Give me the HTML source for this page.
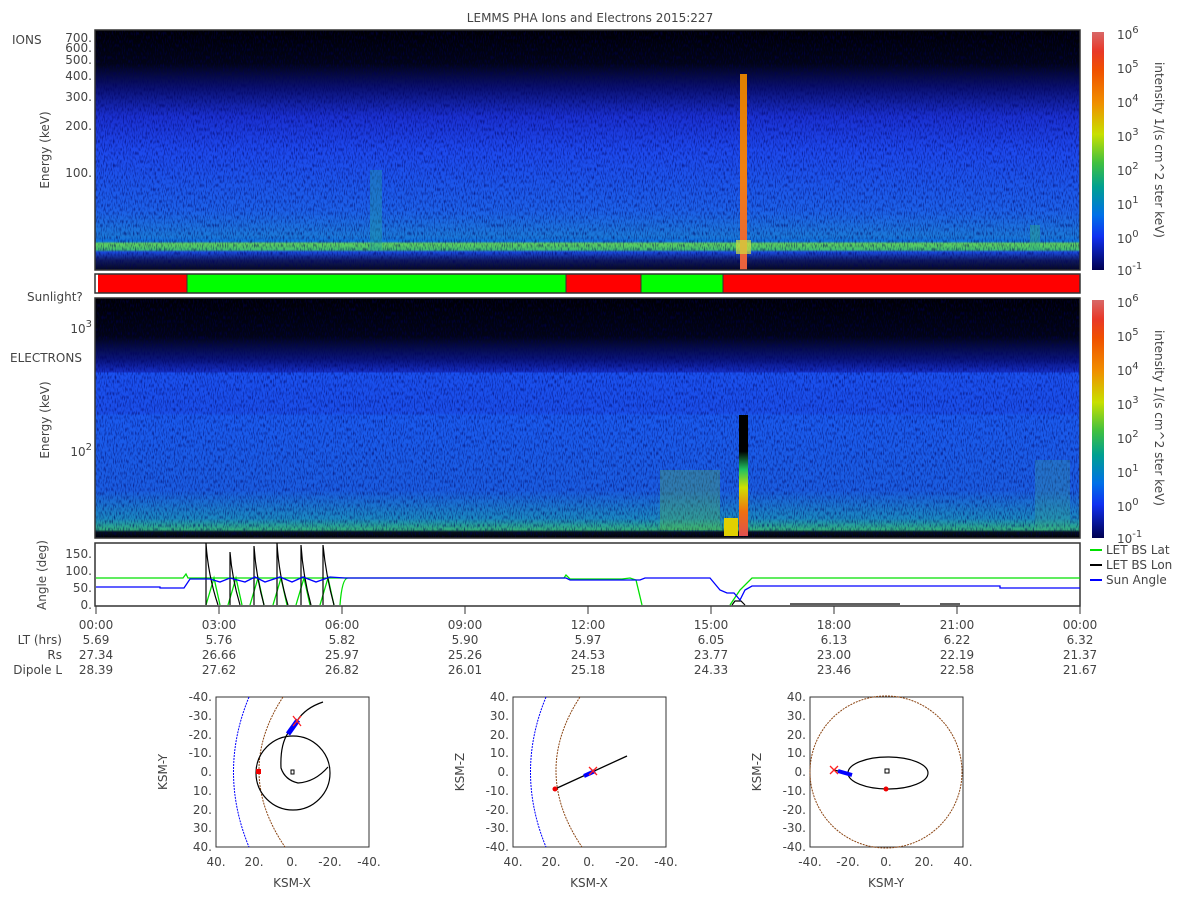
<!DOCTYPE html>
<html><head><meta charset="utf-8"><style>
html,body{margin:0;padding:0;background:#fff;}
svg{display:block;font-family:"DejaVu Sans","Liberation Sans",sans-serif;}
text{fill:#444;font-size:12px;}
</style></head><body>
<svg width="1200" height="900" viewBox="0 0 1200 900" xmlns="http://www.w3.org/2000/svg">
<defs>
<linearGradient id="ionbg" x1="0" y1="0" x2="0" y2="1">
<stop offset="0" stop-color="#000004"/>
<stop offset="0.14" stop-color="#020416"/>
<stop offset="0.24" stop-color="#0a1070"/>
<stop offset="0.36" stop-color="#1a30d0"/>
<stop offset="0.5" stop-color="#1d48ec"/>
<stop offset="0.75" stop-color="#1c60e8"/>
<stop offset="0.86" stop-color="#1b78d8"/>
<stop offset="0.88" stop-color="#0c70e0"/>
<stop offset="0.89" stop-color="#60d060"/>
<stop offset="0.915" stop-color="#40c070"/>
<stop offset="0.925" stop-color="#1a4ae0"/>
<stop offset="0.96" stop-color="#101a60"/>
<stop offset="1" stop-color="#050820"/>
</linearGradient>
<linearGradient id="elbg" x1="0" y1="0" x2="0" y2="1">
<stop offset="0" stop-color="#000004"/>
<stop offset="0.16" stop-color="#020416"/>
<stop offset="0.26" stop-color="#0a1580"/>
<stop offset="0.31" stop-color="#1530c8"/>
<stop offset="0.31" stop-color="#1a50ee"/>
<stop offset="0.48" stop-color="#1a4ee8"/>
<stop offset="0.49" stop-color="#1a5aee"/>
<stop offset="0.8" stop-color="#1a5ce0"/>
<stop offset="0.92" stop-color="#1a88c0"/>
<stop offset="0.965" stop-color="#30b080"/>
<stop offset="0.975" stop-color="#081020"/>
<stop offset="1" stop-color="#000000"/>
</linearGradient>
<linearGradient id="cbar" x1="0" y1="0" x2="0" y2="1">
<stop offset="0" stop-color="#d86868"/>
<stop offset="0.08" stop-color="#e83828"/>
<stop offset="0.16" stop-color="#f05000"/>
<stop offset="0.3" stop-color="#f09000"/>
<stop offset="0.43" stop-color="#c8e000"/>
<stop offset="0.55" stop-color="#40c040"/>
<stop offset="0.65" stop-color="#00a090"/>
<stop offset="0.77" stop-color="#0070e8"/>
<stop offset="0.86" stop-color="#1030f0"/>
<stop offset="1" stop-color="#000050"/>
</linearGradient>
<linearGradient id="spike" x1="0" y1="0" x2="0" y2="1">
<stop offset="0" stop-color="#e08000"/>
<stop offset="0.5" stop-color="#f08010"/>
<stop offset="1" stop-color="#e86040"/>
</linearGradient>
<linearGradient id="espike" x1="0" y1="0" x2="0" y2="1">
<stop offset="0" stop-color="#000"/>
<stop offset="0.3" stop-color="#000"/>
<stop offset="0.45" stop-color="#20c060"/>
<stop offset="0.6" stop-color="#d0e000"/>
<stop offset="0.8" stop-color="#f07010"/>
<stop offset="1" stop-color="#e05050"/>
</linearGradient>
<filter id="noise" x="0" y="0" width="100%" height="100%">
<feTurbulence type="fractalNoise" baseFrequency="0.9 0.25" numOctaves="1" seed="3"/>
<feColorMatrix type="matrix" values="0 0 0 0 0  0 0 0 0 0  0 0 0 0 0.1  0 0 0 -3 1.6"/>
</filter>
</defs>

<text x="590" y="22" text-anchor="middle">LEMMS PHA Ions and Electrons  2015:227</text>

<!-- ION spectrogram -->
<rect x="95" y="30" width="985" height="240" fill="url(#ionbg)"/>
<rect x="95" y="30" width="985" height="240" filter="url(#noise)" opacity="0.6"/>
<rect x="370" y="170" width="12" height="80" fill="#20a0a0" opacity="0.4"/>
<rect x="740" y="74" width="7" height="196" fill="url(#spike)"/>
<rect x="736" y="240" width="15" height="14" fill="#d0e040" opacity="0.7"/>
<rect x="1030" y="225" width="10" height="25" fill="#30b080" opacity="0.4"/>
<rect x="95" y="30" width="985" height="240" fill="none" stroke="#333" stroke-width="1.5"/>
<text x="12" y="44">IONS</text>
<g text-anchor="end">
<text x="92" y="42">700.</text><text x="92" y="52">600.</text><text x="92" y="64">500.</text>
<text x="92" y="80">400.</text><text x="92" y="101">300.</text><text x="92" y="130">200.</text>
<text x="92" y="177">100.</text>
</g>
<text transform="translate(49,150) rotate(-90)" text-anchor="middle">Energy (keV)</text>

<!-- colorbar ions -->
<rect x="1092" y="32" width="12" height="238" fill="url(#cbar)"/>
<g font-size="13">
<text x="1117" y="39">10<tspan dy="-6" font-size="10">6</tspan></text>
<text x="1117" y="73">10<tspan dy="-6" font-size="10">5</tspan></text>
<text x="1117" y="107">10<tspan dy="-6" font-size="10">4</tspan></text>
<text x="1117" y="141">10<tspan dy="-6" font-size="10">3</tspan></text>
<text x="1117" y="175">10<tspan dy="-6" font-size="10">2</tspan></text>
<text x="1117" y="209">10<tspan dy="-6" font-size="10">1</tspan></text>
<text x="1117" y="243">10<tspan dy="-6" font-size="10">0</tspan></text>
<text x="1117" y="275">10<tspan dy="-6" font-size="10">-1</tspan></text>
</g>
<text transform="translate(1155,150) rotate(90)" text-anchor="middle">intensity 1/(s cm^2 ster keV)</text>

<!-- Sunlight bar -->
<rect x="95" y="274" width="985" height="19" fill="#ff0000" stroke="#333" stroke-width="1"/>
<rect x="95" y="274" width="3" height="19" fill="#fff"/>
<rect x="187" y="274" width="379" height="19" fill="#00ff00"/>
<rect x="641" y="274" width="82" height="19" fill="#00ff00"/>
<line x1="187" y1="274" x2="187" y2="293" stroke="#333"/><line x1="566" y1="274" x2="566" y2="293" stroke="#333"/>
<line x1="641" y1="274" x2="641" y2="293" stroke="#333"/><line x1="723" y1="274" x2="723" y2="293" stroke="#333"/>
<rect x="95" y="274" width="985" height="19" fill="none" stroke="#333" stroke-width="1.5"/>
<text x="27" y="301">Sunlight?</text>

<!-- ELECTRON spectrogram -->
<rect x="95" y="298" width="985" height="240" fill="url(#elbg)"/>
<rect x="95" y="298" width="985" height="240" filter="url(#noise)" opacity="0.6"/>
<rect x="660" y="470" width="60" height="60" fill="#60c040" opacity="0.3"/>
<rect x="724" y="518" width="14" height="18" fill="#e0d000"/>
<rect x="739" y="415" width="9" height="121" fill="url(#espike)"/>
<rect x="1035" y="460" width="35" height="70" fill="#40b080" opacity="0.25"/>
<rect x="95" y="298" width="985" height="240" fill="none" stroke="#333" stroke-width="1.5"/>
<text x="10" y="362">ELECTRONS</text>
<text x="92" y="333" text-anchor="end">10<tspan dy="-6" font-size="10">3</tspan></text>
<text x="92" y="456" text-anchor="end">10<tspan dy="-6" font-size="10">2</tspan></text>
<text transform="translate(49,420) rotate(-90)" text-anchor="middle">Energy (keV)</text>

<rect x="1092" y="300" width="12" height="238" fill="url(#cbar)"/>
<g font-size="13">
<text x="1117" y="307">10<tspan dy="-6" font-size="10">6</tspan></text>
<text x="1117" y="341">10<tspan dy="-6" font-size="10">5</tspan></text>
<text x="1117" y="375">10<tspan dy="-6" font-size="10">4</tspan></text>
<text x="1117" y="409">10<tspan dy="-6" font-size="10">3</tspan></text>
<text x="1117" y="443">10<tspan dy="-6" font-size="10">2</tspan></text>
<text x="1117" y="477">10<tspan dy="-6" font-size="10">1</tspan></text>
<text x="1117" y="511">10<tspan dy="-6" font-size="10">0</tspan></text>
<text x="1117" y="543">10<tspan dy="-6" font-size="10">-1</tspan></text>
</g>
<text transform="translate(1155,418) rotate(90)" text-anchor="middle">intensity 1/(s cm^2 ster keV)</text>

<!-- Angle plot -->
<rect x="95" y="543" width="985" height="63" fill="#fff" stroke="#333" stroke-width="1.5"/>
<g text-anchor="end">
<text x="92" y="558">150.</text><text x="92" y="575">100.</text><text x="92" y="592">50.</text><text x="92" y="609">0.</text>
</g>
<text transform="translate(46,575) rotate(-90)" text-anchor="middle">Angle (deg)</text>
<path fill="none" stroke="#00e000" stroke-width="1.3" d="M96,578 H183 L186,574 L188,578 H360 M206,605 L214,578 L220,605 M228,605 L236,578 L242,605 M250,605 L258,578 L264,605 M273,605 L281,578 L287,605 M296,605 L304,578 L310,605 M320,605 L328,578 L334,605 M340,605 Q342,578 348,578 H564 L566,575 L570,579 H622 L630,578 L636,580 L642,605 M730,605 L740,590 L752,578 H1080"/>
<path fill="none" stroke="#000" stroke-width="1.2" d="M206,605 V543 Q208,575 218,605 M230,605 V552 Q232,578 240,605 M254,605 V546 Q256,576 264,605 M277,605 V543 Q279,576 288,605 M301,605 V545 Q303,576 311,605 M323,605 V545 Q326,576 334,605 M732,605 L735,601 H741 L745,605 M790,604 H900 M940,604 H960"/>
<path fill="none" stroke="#0000ff" stroke-width="1.3" d="M96,587 H160 V588 H184 L190,579 H210 L220,582 L230,578 L245,582 L255,577 L265,582 L280,577 L292,582 L303,577 L316,582 L330,577 L345,578 H566 L570,580 H640 L645,578 H710 L720,590 L727,593 L734,593 L740,600 L745,590 L752,586 H1000 V588 H1080"/>
<line x1="1090" y1="550" x2="1102" y2="550" stroke="#00e000" stroke-width="2"/><text x="1106" y="554" font-size="11">LET BS Lat</text>
<line x1="1090" y1="565" x2="1102" y2="565" stroke="#000" stroke-width="2"/><text x="1106" y="569" font-size="11">LET BS Lon</text>
<line x1="1090" y1="580" x2="1102" y2="580" stroke="#0000ff" stroke-width="2"/><text x="1106" y="584" font-size="11">Sun Angle</text>
<g stroke="#333">
<line x1="96" y1="606" x2="96" y2="614"/><line x1="219" y1="606" x2="219" y2="614"/><line x1="342" y1="606" x2="342" y2="614"/>
<line x1="465" y1="606" x2="465" y2="614"/><line x1="588" y1="606" x2="588" y2="614"/><line x1="711" y1="606" x2="711" y2="614"/>
<line x1="834" y1="606" x2="834" y2="614"/><line x1="957" y1="606" x2="957" y2="614"/><line x1="1080" y1="606" x2="1080" y2="614"/>
</g>

<g text-anchor="end">
<text x="62" y="644">LT (hrs)</text><text x="62" y="659">Rs</text><text x="62" y="674">Dipole L</text>
</g>
<g text-anchor="middle">
<text x="96" y="629">00:00</text><text x="219" y="629">03:00</text><text x="342" y="629">06:00</text><text x="465" y="629">09:00</text><text x="588" y="629">12:00</text><text x="711" y="629">15:00</text><text x="834" y="629">18:00</text><text x="957" y="629">21:00</text><text x="1080" y="629">00:00</text>
<text x="96" y="644">5.69</text><text x="219" y="644">5.76</text><text x="342" y="644">5.82</text><text x="465" y="644">5.90</text><text x="588" y="644">5.97</text><text x="711" y="644">6.05</text><text x="834" y="644">6.13</text><text x="957" y="644">6.22</text><text x="1080" y="644">6.32</text>
<text x="96" y="659">27.34</text><text x="219" y="659">26.66</text><text x="342" y="659">25.97</text><text x="465" y="659">25.26</text><text x="588" y="659">24.53</text><text x="711" y="659">23.77</text><text x="834" y="659">23.00</text><text x="957" y="659">22.19</text><text x="1080" y="659">21.37</text>
<text x="96" y="674">28.39</text><text x="219" y="674">27.62</text><text x="342" y="674">26.82</text><text x="465" y="674">26.01</text><text x="588" y="674">25.18</text><text x="711" y="674">24.33</text><text x="834" y="674">23.46</text><text x="957" y="674">22.58</text><text x="1080" y="674">21.67</text>
</g>

<!-- Orbit plot 1 -->
<g>
<rect x="216" y="697" width="153" height="150" fill="#fff" stroke="#333"/>
<g text-anchor="end" font-size="11">
<text x="212" y="701">-40.</text><text x="212" y="720">-30.</text><text x="212" y="739">-20.</text><text x="212" y="757">-10.</text><text x="212" y="776">0.</text><text x="212" y="795">10.</text><text x="212" y="814">20.</text><text x="212" y="832">30.</text><text x="212" y="851">40.</text>
</g>
<g text-anchor="middle" font-size="11">
<text x="216" y="866">40.</text><text x="254" y="866">20.</text><text x="292" y="866">0.</text><text x="330" y="866">-20.</text><text x="369" y="866">-40.</text>
</g>
<text x="292" y="887" text-anchor="middle">KSM-X</text>
<text transform="translate(167,772) rotate(-90)" text-anchor="middle">KSM-Y</text>
<path d="M249,697 Q218,772 249,847" fill="none" stroke="#0000ff" stroke-dasharray="2,1"/>
<path d="M283,697 Q234,772 285,847" fill="none" stroke="#8b4513" stroke-dasharray="2,1"/>
<circle cx="293" cy="773" r="37" fill="none" stroke="#000" stroke-width="1.2"/>
<path d="M323,702 Q305,708 297,721 L288,733 Q280,745 281,768 Q285,780 298,783 Q315,782 328,767" fill="none" stroke="#000" stroke-width="1.2"/>
<path d="M288,734 L298,720" stroke="#0000ff" stroke-width="5"/>
<path d="M293,716 L301,726 M301,716 L293,726" stroke="#ff2020" stroke-width="1.3"/>
<rect x="256" y="769" width="5" height="5" fill="#ee0000"/>
<rect x="291" y="770" width="3" height="4" fill="none" stroke="#000"/>
</g>

<!-- Orbit plot 2 -->
<g>
<rect x="513" y="697" width="153" height="150" fill="#fff" stroke="#333"/>
<g text-anchor="end" font-size="11">
<text x="509" y="701">40.</text><text x="509" y="720">30.</text><text x="509" y="739">20.</text><text x="509" y="757">10.</text><text x="509" y="776">0.</text><text x="509" y="795">-10.</text><text x="509" y="814">-20.</text><text x="509" y="832">-30.</text><text x="509" y="851">-40.</text>
</g>
<g text-anchor="middle" font-size="11">
<text x="513" y="866">40.</text><text x="551" y="866">20.</text><text x="589" y="866">0.</text><text x="627" y="866">-20.</text><text x="666" y="866">-40.</text>
</g>
<text x="589" y="887" text-anchor="middle">KSM-X</text>
<text transform="translate(464,772) rotate(-90)" text-anchor="middle">KSM-Z</text>
<path d="M546,697 Q515,772 546,847" fill="none" stroke="#0000ff" stroke-dasharray="2,1"/>
<path d="M580,697 Q531,772 582,847" fill="none" stroke="#8b4513" stroke-dasharray="2,1"/>
<path d="M555,789 L627,756" stroke="#000" stroke-width="1.3"/>
<path d="M584,776 L595,771" stroke="#0000ff" stroke-width="4"/>
<path d="M589,767 L597,775 M597,767 L589,775" stroke="#ff2020" stroke-width="1.3"/>
<circle cx="555" cy="789" r="2.5" fill="#ee0000"/>
</g>

<!-- Orbit plot 3 -->
<g>
<rect x="810" y="697" width="153" height="150" fill="#fff" stroke="#333"/>
<g text-anchor="end" font-size="11">
<text x="806" y="701">40.</text><text x="806" y="720">30.</text><text x="806" y="739">20.</text><text x="806" y="757">10.</text><text x="806" y="776">0.</text><text x="806" y="795">-10.</text><text x="806" y="814">-20.</text><text x="806" y="832">-30.</text><text x="806" y="851">-40.</text>
</g>
<g text-anchor="middle" font-size="11">
<text x="810" y="866">-40.</text><text x="848" y="866">-20.</text><text x="886" y="866">0.</text><text x="924" y="866">20.</text><text x="963" y="866">40.</text>
</g>
<text x="886" y="887" text-anchor="middle">KSM-Y</text>
<text transform="translate(761,772) rotate(-90)" text-anchor="middle">KSM-Z</text>
<circle cx="886" cy="772" r="76" fill="none" stroke="#8b4513" stroke-dasharray="2,1"/>
<ellipse cx="888" cy="773" rx="40" ry="16" fill="none" stroke="#000" stroke-width="1.2"/>
<path d="M834,770 L850,774" stroke="#000" stroke-width="1.2"/>
<path d="M838,771 L852,775" stroke="#0000ff" stroke-width="4"/>
<path d="M830,766 L838,774 M838,766 L830,774" stroke="#ff2020" stroke-width="1.3"/>
<circle cx="886" cy="789" r="2.5" fill="#ee0000"/>
<rect x="885" y="769" width="4" height="4" fill="none" stroke="#000"/>
</g>
</svg>
</body></html>
